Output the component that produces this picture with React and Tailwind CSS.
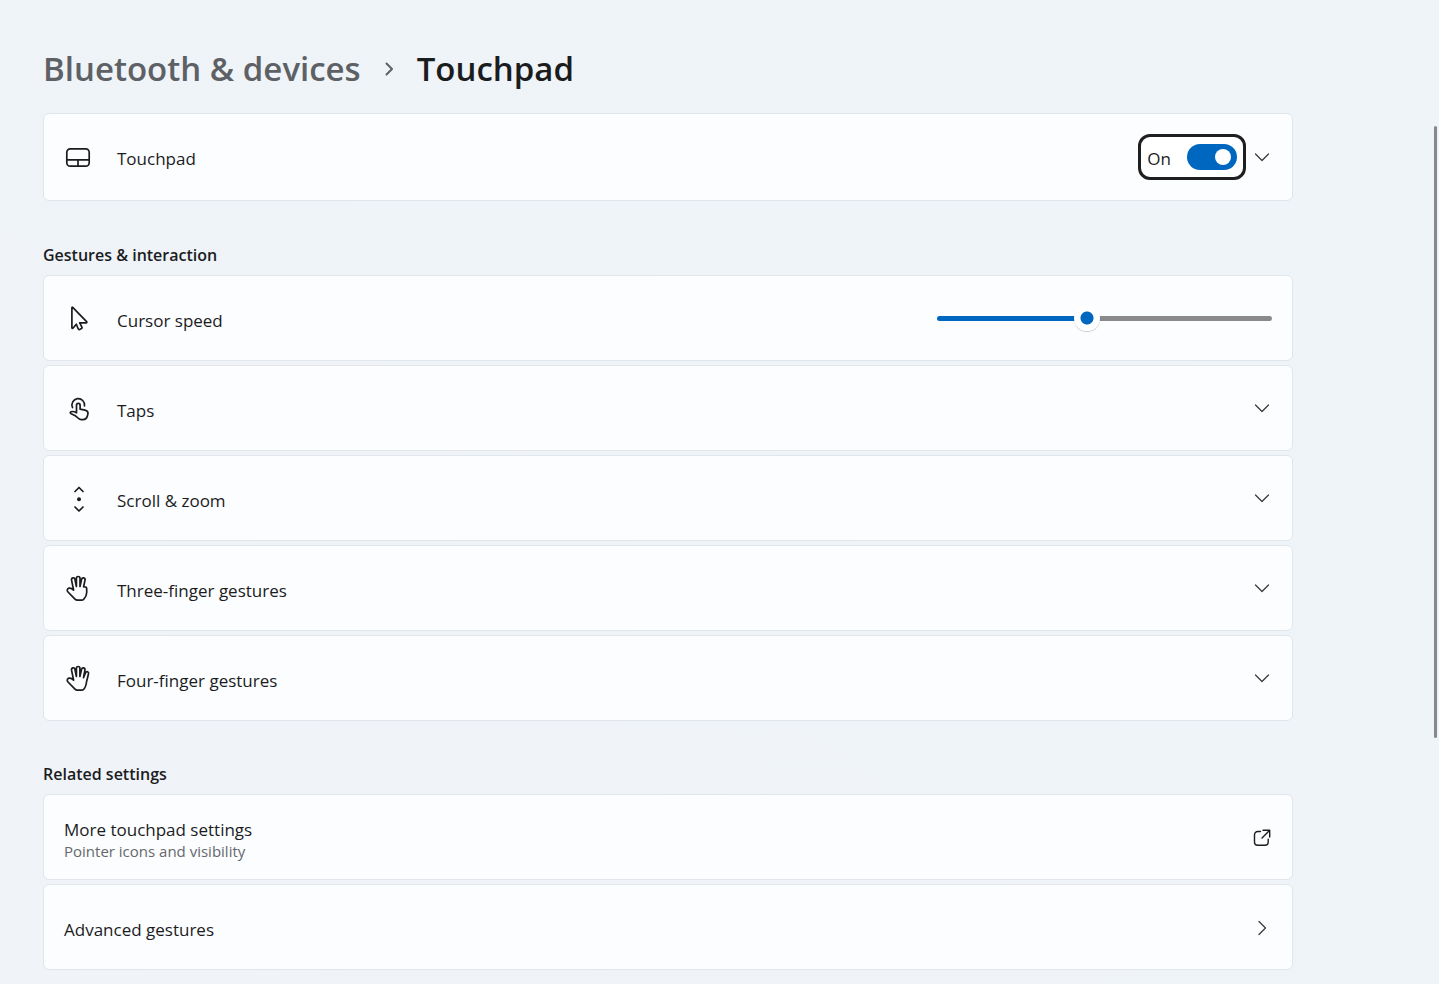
import { useState } from "react";

const svgProps = {
  fill: "none",
  stroke: "currentColor",
  strokeLinecap: "round",
  strokeLinejoin: "round",
  "aria-hidden": true,
};

function ItemIcon({ children }) {
  return (
    <svg {...svgProps} viewBox="0 0 28 28" strokeWidth="1.7" className="size-7 shrink-0">
      {children}
    </svg>
  );
}

function TouchpadIcon() {
  return (
    <ItemIcon>
      <rect x="2.8" y="5.8" width="22.4" height="17.4" rx="3.4" />
      <path d="M2.8 16.8h22.4M14 16.8v6.4" />
    </ItemIcon>
  );
}

function CursorIcon() {
  return (
    <ItemIcon>
      <path d="M7.9 3.6v20.2c0 .6.6.8 1 .4l3.4-4 1.9 4.6c.3.7.9.9 1.5.6l1.7-.8c.6-.3.8-.9.5-1.5l-2.200-4.300h6.400c.7 0 1-.7.5-1.200L8.700 3.300c-.3-.3-.8-.1-.8.3z" />
    </ItemIcon>
  );
}

function TapIcon() {
  return (
    <ItemIcon>
      <path d="M8.500 13.500A6.300 6.300 0 1 1 20.500 11.800" />
      <path d="M12.500 18.800V11c0-2.300 3.600-2.300 3.600 0v4.200l4.900.9c2.200.5 3.300 1.900 2.900 4l-.6 2.200c-.6 2.200-2.100 3.300-4.300 3.300h-1.600c-1.300 0-2.200-.4-3.100-1.400-2-2.300-4.100-3.300-7.100-4.400-1.200-.5-1.200-1.500-.2-2 1.600-.7 3.500-.2 5.500 1z" />
    </ItemIcon>
  );
}

function ScrollIcon() {
  return (
    <ItemIcon>
      <path d="M11 7.500l4-4 4 4M11 23l4 4 4-4" />
      <circle cx="15" cy="15.300" r="2" fill="currentColor" stroke="none" />
    </ItemIcon>
  );
}

function ThreeFingerIcon() {
  return (
    <ItemIcon>
      <path d="M9.600 16.200L7.600 6.300C7 3.400 10.400 2.900 10.900 5.200L12.400 12.500V4.200C12.400 1.900 16 1.900 16 4.200V12.500L17.600 5.200C18.200 3 21.600 3.600 21 6.200L19.600 12.800C22 12.600 22.700 13.400 22.700 15V18.500C22.700 21.500 21.600 23.300 19.800 25.200C19.200 25.900 18.500 26.200 17.600 26.200H13.400C12.300 26.200 11.700 25.900 11 25.200L4 18C2.600 16.600 3.200 14.600 5 14.200C6.800 13.800 8.300 14.800 9.600 16.200Z" />
    </ItemIcon>
  );
}

function FourFingerIcon() {
  return (
    <ItemIcon>
      <path d="M9.600 16.200L7.600 6.300C7 3.400 10.400 2.900 10.900 5.200L12.400 12.500V4.200C12.400 1.900 15.900 1.900 15.900 4.200V12.500L17.600 5.200C18.200 3 21.400 3.600 20.900 6.200L19.500 13.600L21.600 8.700C22.500 6.700 25.100 7.600 24.500 9.800L22.600 17.500C22.200 20.700 21.600 23.300 19.800 25.200C19.200 25.900 18.500 26.200 17.600 26.200H13.400C12.300 26.200 11.700 25.900 11 25.200L4 18C2.600 16.600 3.200 14.600 5 14.200C6.800 13.800 8.300 14.800 9.600 16.200Z" />
    </ItemIcon>
  );
}

function ChevronDown() {
  return (
    <svg {...svgProps} viewBox="0 0 20 20" strokeWidth="1.3" className="size-5 shrink-0 text-[#3a3b3d]">
      <path d="M3.5 7l6.500 6.500L16.500 7" />
    </svg>
  );
}

function ChevronRight() {
  return (
    <svg {...svgProps} viewBox="0 0 20 20" strokeWidth="1.3" className="size-5 shrink-0 text-[#3a3b3d]">
      <path d="M7 4.500l6.500 6.500L7 17.500" />
    </svg>
  );
}

function OpenExternal() {
  return (
    <svg {...svgProps} viewBox="0 0 20 20" strokeWidth="1.4" className="size-5 shrink-0">
      <path d="M8.500 4.500H5.700A3.200 3.200 0 0 0 2.500 7.700v7.300a3.200 3.200 0 0 0 3.200 3.200h7.300a3.200 3.200 0 0 0 3.200-3.200v-2.700M11 3.300h6.700V10M17.500 3.500L10 11" />
    </svg>
  );
}

const card =
  "flex w-full items-center rounded-md border border-[#e0e6eb] bg-[#fbfdfe] px-5 text-left";

function ExpanderRow({ icon, label }) {
  return (
    <button type="button" className={`${card} h-[86px] gap-[25px]`}>
      {icon}
      <span className="flex-1 pt-1.5">{label}</span>
      <ChevronDown />
    </button>
  );
}

const MAX_SPEED = 18;

export default function App() {
  const [enabled, setEnabled] = useState(true);
  const [speed, setSpeed] = useState(8);
  const fill = (speed / MAX_SPEED) * 100;

  return (
    <div className="flex min-h-screen bg-linear-to-tr from-[#f0f3f8] to-[#eef4f8] font-['Open_Sans','Noto_Sans',sans-serif] text-[17px] leading-6 text-[#1b1c1e]">
      <main className="flex-1 pt-11 pb-3.5 pl-[43px]">
        <div className="max-w-[1250px]">
          <nav aria-label="Breadcrumb" className="flex h-[50px] items-center text-[33px] font-semibold leading-[50px]">
            <a href="#devices" className="text-[#5d6165]">Bluetooth &amp; devices</a>
            <svg {...svgProps} viewBox="0 0 20 20" strokeWidth="2" className="mx-[18px] size-5 shrink-0 text-[#5d6165]">
              <path d="M7.500 4.500l5.500 5.500-5.500 5.500" />
            </svg>
            <h1>Touchpad</h1>
          </nav>

          <div className={`${card} mt-[19px] h-[88px]`}>
            <TouchpadIcon />
            <span className="ml-[25px] flex-1 pt-1">Touchpad</span>
            <label className="flex h-[46px] items-center gap-4 rounded-xl border-3 border-[#1f1f21] bg-white px-1.5">
              <span className="pt-1">On</span>
              <input
                type="checkbox"
                role="switch"
                aria-label="Touchpad"
                checked={enabled}
                onChange={(e) => setEnabled(e.target.checked)}
                className="flex h-[26px] w-[50px] appearance-none items-center rounded-full bg-[#8a8a8a] px-1.5 outline-none before:block before:size-4 before:rounded-full before:bg-white checked:justify-end checked:bg-[#0067c0]"
              />
            </label>
            <button type="button" aria-label="Expand touchpad" className="ml-1.5">
              <ChevronDown />
            </button>
          </div>

          <section className="mt-[42px]">
            <h2 className="text-base leading-6 font-semibold">Gestures &amp; interaction</h2>
            <div className="mt-2 flex flex-col gap-1">
              <div className={`${card} h-[86px] gap-[25px]`}>
                <CursorIcon />
                <label htmlFor="cursor-speed" className="flex-1 pt-1.5">Cursor speed</label>
                <input
                  id="cursor-speed"
                  type="range"
                  min="0"
                  max={MAX_SPEED}
                  value={speed}
                  onChange={(e) => setSpeed(Number(e.target.value))}
                  style={{ background: `linear-gradient(to right, #0067c0 ${fill}%, #8a8a8c ${fill}%)` }}
                  className="h-[5px] w-[335px] appearance-none rounded-full outline-none [&::-webkit-slider-thumb]:size-[26px] [&::-webkit-slider-thumb]:appearance-none [&::-webkit-slider-thumb]:rounded-full [&::-webkit-slider-thumb]:bg-[radial-gradient(circle,#0067c0_6px,#fff_7px)] [&::-webkit-slider-thumb]:shadow-[0_1px_1px_rgba(0,0,0,0.2)]"
                />
              </div>
              <ExpanderRow icon={<TapIcon />} label="Taps" />
              <ExpanderRow icon={<ScrollIcon />} label="Scroll & zoom" />
              <ExpanderRow icon={<ThreeFingerIcon />} label="Three-finger gestures" />
              <ExpanderRow icon={<FourFingerIcon />} label="Four-finger gestures" />
            </div>
          </section>

          <section className="mt-[41px]">
            <h2 className="text-base leading-6 font-semibold">Related settings</h2>
            <div className="mt-2 flex flex-col gap-1">
              <a href="#more" className={`${card} h-[86px]`}>
                <span className="flex flex-1 flex-col pt-1.5">
                  <span className="leading-[22px]">More touchpad settings</span>
                  <span className="text-[15px] leading-5 text-[#66686b]">Pointer icons and visibility</span>
                </span>
                <OpenExternal />
              </a>
              <a href="#advanced" className={`${card} h-[86px]`}>
                <span className="flex-1 pt-1.5">Advanced gestures</span>
                <ChevronRight />
              </a>
            </div>
          </section>
        </div>
      </main>
      <div aria-hidden="true" className="mt-[126px] mr-0.5 h-[612px] w-[3px] rounded-full bg-[#85898d]" />
    </div>
  );
}
